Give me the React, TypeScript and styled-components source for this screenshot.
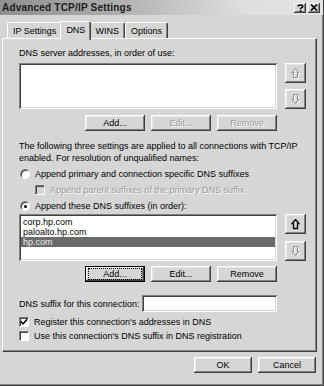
import React from "react";
import styled, { createGlobalStyle, css } from "styled-components";

const GlobalStyle = createGlobalStyle`
  html, body { margin: 0; padding: 0; background: #d6d6d6; }
  body { font-family: "Liberation Sans", Arial, sans-serif; font-size: 9px; color: #000; }
  #root { width: 324px; height: 386px; }
`;

const FACE = "#d6d6d6";

const Window = styled.div`
  box-sizing: border-box;
  width: 324px;
  height: 386px;
  background: ${FACE};
  display: flex;
  flex-direction: column;
  border-right: 1px solid #404040;
  border-bottom: 1px solid #404040;
  box-shadow: inset -1px -1px #808080;
  overflow: hidden;
`;

const TitleBar = styled.div`
  height: 15px;
  flex: none;
  display: flex;
  align-items: center;
  justify-content: space-between;
  padding: 0 3px 0 2px;
  background: linear-gradient(to right, #8f8f8f, #a8a8a8 30%, #dedede 75%, #e4e4e4);
`;

const Title = styled.span`
  font-weight: bold;
  font-size: 10px;
  color: #1c1c1c;
  letter-spacing: 0.2px;
`;

const Caps = styled.div`
  display: flex;
  gap: 2px;
  align-items: center;
`;

const CapButton = styled.div`
  box-sizing: border-box;
  width: 12px;
  height: 10px;
  background: ${FACE};
  box-shadow: inset -1px -1px #404040, inset 1px 1px #fff, inset -2px -2px #808080;
  display: flex;
  align-items: center;
  justify-content: center;
  font-weight: bold;
  font-size: 9px;
  line-height: 1;
  color: #000;
`;

const Body = styled.div`
  flex: 1;
  display: flex;
  flex-direction: column;
  padding: 6px 6px 0 2px;
`;

const TabStrip = styled.div`
  height: 17px;
  display: flex;
  align-items: flex-end;
  padding-left: 5px;
  position: relative;
  z-index: 1;
`;

const Tab = styled.div<{ $active?: boolean }>`
  box-sizing: border-box;
  height: ${(p) => (p.$active ? 19 : 16)}px;
  margin-bottom: ${(p) => (p.$active ? -2 : 0)}px;
  padding: 0 5px;
  margin-left: ${(p) => (p.$active ? -2 : 0)}px;
  margin-right: ${(p) => (p.$active ? -2 : 0)}px;
  display: flex;
  align-items: center;
  background: ${FACE};
  border-top: 1px solid #fff;
  border-left: 1px solid #fff;
  border-right: 1px solid #404040;
  border-top-left-radius: 2px;
  border-top-right-radius: 2px;
  box-shadow: inset -1px 0 #808080;
  font-size: 9px;
  padding-bottom: ${(p) => (p.$active ? 3 : 0)}px;
  position: relative;
  z-index: ${(p) => (p.$active ? 2 : 0)};
`;

const Panel = styled.div`
  box-sizing: border-box;
  height: 314px;
  border-top: 1px solid #fff;
  border-left: 1px solid #fff;
  border-right: 1px solid #404040;
  border-bottom: 1px solid #404040;
  box-shadow: inset -1px -1px #808080;
  padding: 0 0 0 16px;
  display: flex;
  flex-direction: column;
`;

const Text = styled.div<{ $mt?: number; $disabled?: boolean }>`
  line-height: 12px;
  font-size: 9px;
  margin-top: ${(p) => p.$mt ?? 0}px;
  white-space: nowrap;
  ${(p) =>
    p.$disabled &&
    css`
      color: #9a9a9a;
      text-shadow: 1px 1px #fff;
    `}
`;

const ListRow = styled.div<{ $mt: number }>`
  display: flex;
  gap: 8px;
  margin-top: ${(p) => p.$mt}px;
`;

const ListBox = styled.div<{ $h: number }>`
  box-sizing: border-box;
  width: 258px;
  height: ${(p) => p.$h}px;
  background: #fff;
  box-shadow: inset 1px 1px #808080, inset -1px -1px #fff, inset 2px 2px #404040, inset -2px -2px ${FACE};
  padding: 3px 2px;
  display: flex;
  flex-direction: column;
`;

const ListItem = styled.div<{ $selected?: boolean }>`
  line-height: 10px;
  height: 10px;
  padding-left: 2px;
  font-size: 9px;
  color: ${(p) => (p.$selected ? "#f0f0f0" : "#000")};
  background: ${(p) => (p.$selected ? "#6b6b6b" : "transparent")};
`;

const ArrowCol = styled.div`
  display: flex;
  flex-direction: column;
  justify-content: space-between;
`;

const bevel = css`
  background: ${FACE};
  box-shadow: inset -1px -1px #404040, inset 1px 1px #fff, inset -2px -2px #808080, inset 2px 2px #e6e6e6;
`;

const ArrowButton = styled.div`
  box-sizing: border-box;
  width: 21px;
  height: 20px;
  ${bevel};
  display: flex;
  align-items: center;
  justify-content: center;
`;

const ButtonRow = styled.div<{ $mt: number; $w?: number }>`
  display: flex;
  justify-content: flex-end;
  gap: 6px;
  width: ${(p) => p.$w ?? 258}px;
  margin-top: ${(p) => p.$mt}px;
`;

const Button = styled.div<{ $disabled?: boolean; $default?: boolean; $w?: number }>`
  box-sizing: border-box;
  width: ${(p) => p.$w ?? 60}px;
  height: 16px;
  ${bevel};
  display: flex;
  align-items: center;
  justify-content: center;
  font-size: 9px;
  ${(p) =>
    p.$disabled &&
    css`
      color: #9a9a9a;
      text-shadow: 1px 1px #fff;
    `}
  ${(p) =>
    p.$default &&
    css`
      border: 1px solid #000;
      box-shadow: inset -1px -1px #404040, inset 1px 1px #fff, inset -2px -2px #808080;
    `}
`;

const FocusText = styled.span`
  box-sizing: border-box;
  width: 52px;
  height: 10px;
  display: flex;
  align-items: center;
  justify-content: center;
  outline: 1px dotted #000;
`;

const OptionRow = styled.div<{ $mt: number; $indent?: number }>`
  display: flex;
  align-items: center;
  gap: 5px;
  height: 12px;
  margin-top: ${(p) => p.$mt}px;
  margin-left: ${(p) => p.$indent ?? 0}px;
`;

const Radio = styled.div<{ $checked?: boolean }>`
  box-sizing: border-box;
  width: 10px;
  height: 10px;
  border-radius: 50%;
  background: #fff;
  border: 1px solid;
  border-color: #808080 #fff #fff #808080;
  box-shadow: inset 1px 1px #404040;
  display: flex;
  align-items: center;
  justify-content: center;
  &::after {
    content: "";
    width: 3px;
    height: 3px;
    border-radius: 50%;
    background: #000;
    display: ${(p) => (p.$checked ? "block" : "none")};
  }
`;

const Check = styled.div<{ $disabled?: boolean }>`
  box-sizing: border-box;
  width: 10px;
  height: 10px;
  background: ${(p) => (p.$disabled ? FACE : "#fff")};
  border: 1px solid;
  border-color: #808080 #fff #fff #808080;
  box-shadow: inset 1px 1px #404040;
  display: flex;
  align-items: center;
  justify-content: center;
`;

const SuffixRow = styled.div`
  display: flex;
  align-items: center;
  justify-content: space-between;
  width: 258px;
  margin-top: 13px;
`;

const Input = styled.div`
  box-sizing: border-box;
  width: 135px;
  height: 17px;
  background: #fff;
  box-shadow: inset 1px 1px #808080, inset -1px -1px #fff, inset 2px 2px #404040, inset -2px -2px ${FACE};
`;

const Footer = styled.div`
  display: flex;
  justify-content: flex-end;
  gap: 6px;
  padding-top: 5px;
  padding-right: 1px;
`;

const UpArrow = ({ disabled }: { disabled?: boolean }) => (
  <svg width="9" height="11" viewBox="0 0 9 11">
    {disabled && (
      <path d="M5.5 1.5 L9 5.5 L7.5 5.5 L7.5 10.5 L3.5 10.5 L3.5 5.5 L2 5.5 Z" fill="none" stroke="#fff" strokeWidth="1" />
    )}
    <path
      d="M4.5 0.5 L8 4.5 L6.5 4.5 L6.5 9.5 L2.5 9.5 L2.5 4.5 L1 4.5 Z"
      fill="none"
      stroke={disabled ? "#8a8a8a" : "#000"}
      strokeWidth={disabled ? 1 : 1.3}
    />
  </svg>
);

const DownArrow = ({ disabled }: { disabled?: boolean }) => (
  <svg width="9" height="11" viewBox="0 0 9 11">
    {disabled && (
      <path d="M5.5 10.5 L9 6.5 L7.5 6.5 L7.5 1.5 L3.5 1.5 L3.5 6.5 L2 6.5 Z" fill="none" stroke="#fff" strokeWidth="1" />
    )}
    <path
      d="M4.5 9.5 L8 5.5 L6.5 5.5 L6.5 0.5 L2.5 0.5 L2.5 5.5 L1 5.5 Z"
      fill="none"
      stroke={disabled ? "#8a8a8a" : "#000"}
      strokeWidth={disabled ? 1 : 1.3}
    />
  </svg>
);

const CheckMark = () => (
  <svg width="8" height="8" viewBox="0 0 8 8">
    <path d="M0.8 3.5 L3 5.8 L7.2 1.2" fill="none" stroke="#000" strokeWidth="1.6" />
  </svg>
);

const HelpGlyph = () => (
  <svg width="7" height="8" viewBox="0 0 7 8">
    <path d="M1.2 2.4 C1.2 0.6 5.8 0.6 5.8 2.4 C5.8 3.8 3.5 3.6 3.5 5.2" fill="none" stroke="#000" strokeWidth="1.5" />
    <rect x="2.7" y="6.2" width="1.6" height="1.6" fill="#000" />
  </svg>
);

const CloseGlyph = () => (
  <svg width="8" height="7" viewBox="0 0 8 7">
    <path d="M1 0.5 L7 6.5 M7 0.5 L1 6.5" fill="none" stroke="#000" strokeWidth="1.6" />
  </svg>
);

export default function App() {
  return (
    <>
      <GlobalStyle />
      <Window>
        <TitleBar>
          <Title>Advanced TCP/IP Settings</Title>
          <Caps>
            <CapButton aria-label="?"><HelpGlyph /></CapButton>
            <CapButton aria-label="Close"><CloseGlyph /></CapButton>
          </Caps>
        </TitleBar>
        <Body>
          <TabStrip>
            <Tab>IP Settings</Tab>
            <Tab $active>DNS</Tab>
            <Tab>WINS</Tab>
            <Tab>Options</Tab>
          </TabStrip>
          <Panel>
            <Text $mt={8}>DNS server addresses, in order of use:</Text>
            <ListRow $mt={4}>
              <ListBox $h={46} />
              <ArrowCol>
                <ArrowButton><UpArrow disabled /></ArrowButton>
                <ArrowButton><DownArrow disabled /></ArrowButton>
              </ArrowCol>
            </ListRow>
            <ButtonRow $mt={6}>
              <Button>Add...</Button>
              <Button $disabled>Edit...</Button>
              <Button $disabled>Remove</Button>
            </ButtonRow>
            <Text $mt={9}>
              The following three settings are applied to all connections with TCP/IP
              <br />
              enabled. For resolution of unqualified names:
            </Text>
            <OptionRow $mt={4} $indent={1}>
              <Radio />
              <Text>Append primary and connection specific DNS suffixes</Text>
            </OptionRow>
            <OptionRow $mt={4} $indent={16}>
              <Check $disabled />
              <Text $disabled>Append parent suffixes of the primary DNS suffix</Text>
            </OptionRow>
            <OptionRow $mt={4} $indent={1}>
              <Radio $checked />
              <Text>Append these DNS suffixes (in order):</Text>
            </OptionRow>
            <ListRow $mt={2}>
              <ListBox $h={47}>
                <ListItem>corp.hp.com</ListItem>
                <ListItem>paloalto.hp.com</ListItem>
                <ListItem $selected>hp.com</ListItem>
              </ListBox>
              <ArrowCol>
                <ArrowButton><UpArrow /></ArrowButton>
                <ArrowButton><DownArrow disabled /></ArrowButton>
              </ArrowCol>
            </ListRow>
            <ButtonRow $mt={5}>
              <Button $default><FocusText>Add...</FocusText></Button>
              <Button>Edit...</Button>
              <Button>Remove</Button>
            </ButtonRow>
            <SuffixRow>
              <Text>DNS suffix for this connection:</Text>
              <Input />
            </SuffixRow>
            <OptionRow $mt={4}>
              <Check><CheckMark /></Check>
              <Text>Register this connection's addresses in DNS</Text>
            </OptionRow>
            <OptionRow $mt={2}>
              <Check />
              <Text>Use this connection's DNS suffix in DNS registration</Text>
            </OptionRow>
          </Panel>
          <Footer>
            <Button $w={58}>OK</Button>
            <Button $w={58}>Cancel</Button>
          </Footer>
        </Body>
      </Window>
    </>
  );
}
